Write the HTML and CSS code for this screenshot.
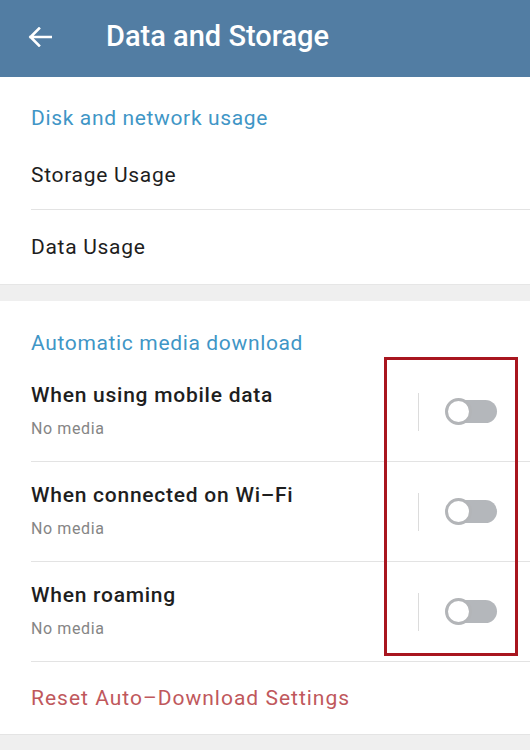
FILE: index.html
```html
<!DOCTYPE html>
<html>
<head>
<meta charset="utf-8">
<link rel="stylesheet" href="styles.css">
</head>
<body>
<div class="app">
  <header class="topbar">
    <svg class="back" width="24" height="20" viewBox="0 0 24 20">
      <path d="M23 10H2.5M11 1.5L2.5 10L11 18.5" fill="none" stroke="#fff" stroke-width="2.6" stroke-linecap="square"/>
    </svg>
    <h1 class="title">Data and Storage</h1>
  </header>

  <section class="card">
    <div class="sec-title sec-title-first">Disk and network usage</div>
    <div class="row row-storage"><span class="label">Storage Usage</span></div>
    <div class="divider"></div>
    <div class="row row-data"><span class="label">Data Usage</span></div>
  </section>

  <div class="gap"></div>

  <section class="card card-media">
    <div class="sec-title sec-title-second">Automatic media download</div>

    <div class="trow">
      <div class="ttext">
        <div class="ttitle">When using mobile data</div>
        <div class="tsub">No media</div>
      </div>
      <div class="vline"></div>
      <div class="switch"><span class="track"></span><span class="thumb"></span></div>
    </div>
    <div class="divider"></div>

    <div class="trow">
      <div class="ttext">
        <div class="ttitle">When connected on Wi–Fi</div>
        <div class="tsub">No media</div>
      </div>
      <div class="vline"></div>
      <div class="switch"><span class="track"></span><span class="thumb"></span></div>
    </div>
    <div class="divider"></div>

    <div class="trow">
      <div class="ttext">
        <div class="ttitle">When roaming</div>
        <div class="tsub">No media</div>
      </div>
      <div class="vline"></div>
      <div class="switch"><span class="track"></span><span class="thumb"></span></div>
    </div>
    <div class="divider"></div>

    <div class="row row-reset"><span class="reset">Reset Auto–Download Settings</span></div>

    <div class="highlight"></div>
  </section>

  <div class="bottom-gap"></div>
</div>
</body>
</html>
```

FILE: styles.css
```css
* { box-sizing: border-box; }
html, body { margin: 0; padding: 0; }
body {
  width: 530px;
  height: 750px;
  overflow: hidden;
  background: #efefef;
  font-family: Roboto, "Liberation Sans", sans-serif;
  color: #222;
}
.app { display: flex; flex-direction: column; }

.topbar {
  height: 77px;
  background: #527da3;
  display: flex;
  align-items: center;
  padding-left: 28px;
}
.back { display: block; margin-top: -4px; }
.title {
  margin: 0 0 0 54px;
  font-size: 29px;
  font-weight: 500;
  color: #fff;
  margin-top: -6px;
}

.card { background: #fff; display: flex; flex-direction: column; }
.card-media { position: relative; }

.sec-title {
  padding-left: 31px;
  font-size: 21px;
  line-height: 28px;
  color: #3f96c6;
  letter-spacing: 0.65px;
}
.sec-title-first { padding-top: 27px; padding-bottom: 8px; }
.sec-title-second { padding-top: 28px; padding-bottom: 5px; }

.row {
  display: flex;
  align-items: center;
  padding-left: 31px;
  font-size: 21px;
}
.row-storage { height: 69px; }
.row-data { height: 74px; }
.row-reset { height: 72px; }

.label { color: #1e1e1e; letter-spacing: 0.7px; }
.reset { color: #c0585c; letter-spacing: 1px; }

.divider {
  height: 1px;
  background: #e3e3e3;
  margin-left: 31px;
}

.gap { height: 17px; background: #efefef; border-top: 1px solid #e6e6e6; }
.bottom-gap { flex: 1; height: 17px; background: #efefef; border-top: 1px solid #e4e4e4; }

.trow {
  height: 99px;
  display: flex;
  align-items: center;
  padding-left: 31px;
  padding-right: 33px;
}
.ttext { flex: 1; display: flex; flex-direction: column; margin-top: -2px; }
.ttitle { font-size: 21px; font-weight: 500; line-height: 28px; color: #1e1e1e; letter-spacing: 0.75px; }
.tsub { font-size: 16px; line-height: 22px; color: #858585; margin-top: 9px; letter-spacing: 0.6px; }

.vline {
  width: 1px;
  height: 38px;
  background: #dcdcdc;
  margin-right: 26px;
}

.switch {
  position: relative;
  width: 52px;
  height: 27px;
}
.track {
  position: absolute;
  left: 8px;
  right: 0;
  top: 2px;
  height: 23px;
  border-radius: 12px;
  background: #b4b7bb;
}
.thumb {
  position: absolute;
  left: 0;
  top: 0;
  width: 27px;
  height: 27px;
  border-radius: 50%;
  background: #fff;
  border: 3px solid #b3b5b8;
}

.highlight {
  position: absolute;
  left: 384px;
  top: 56px;
  width: 134px;
  height: 299px;
  border: 3px solid #a8161f;
  pointer-events: none;
}
```
